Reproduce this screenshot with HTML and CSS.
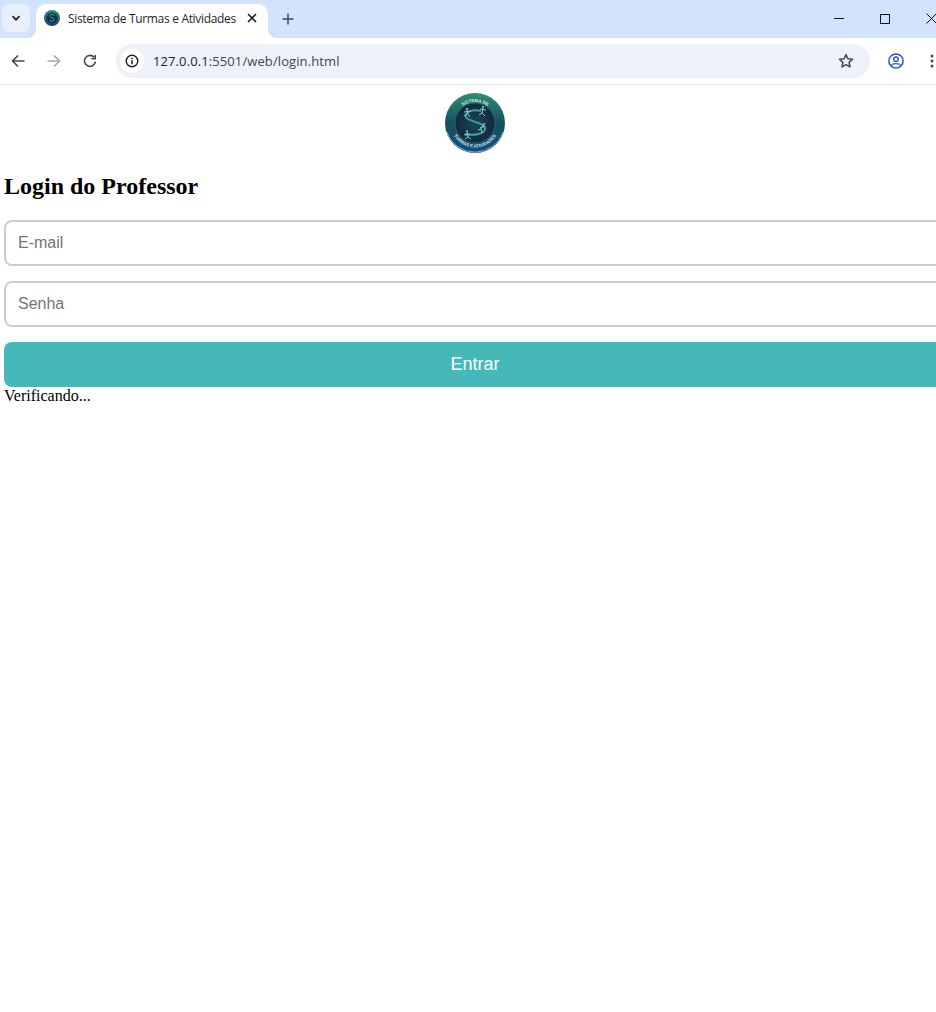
FILE: index.html
```html
<!DOCTYPE html>
<html lang="pt-BR">
<head>
  <meta charset="UTF-8">
  <title>Sistema de Turmas e Atividades</title>
  <link rel="stylesheet" href="styles.css">
</head>
<body>
  <header class="browser">
    <div class="tabstrip">
      <button class="tab-search" aria-label="Pesquisar guias">
        <svg width="12" height="12" viewBox="0 0 12 12"><path d="M2.5 4.2 6 7.7l3.5-3.5" fill="none" stroke="#1f1f1f" stroke-width="1.7"/></svg>
      </button>
      <div class="tab">
        <svg class="tab-icon" width="16" height="16" viewBox="0 0 16 16">
          <defs>
            <linearGradient id="favRing" x1="0" y1="0" x2="0" y2="1">
              <stop offset="0" stop-color="#2f8f78"/>
              <stop offset="1" stop-color="#1d3f6b"/>
            </linearGradient>
          </defs>
          <circle cx="8" cy="8" r="8" fill="url(#favRing)"/>
          <circle cx="8" cy="8" r="5.4" fill="#123347"/>
          <path d="M10.5 5.2C8.5 3.8 5.6 4.6 6 6.4c.4 1.7 4.4 1.4 4.4 3.2 0 1.7-3 2-4.8 1" fill="none" stroke="#5fa8a4" stroke-width=".9"/>
        </svg>
        <span class="tab-title">Sistema de Turmas e Atividades</span>
        <svg class="tab-close" width="10" height="10" viewBox="0 0 10 10"><path d="M1 1l8 8M9 1 1 9" stroke="#1f1f1f" stroke-width="1.6"/></svg>
      </div>
      <svg class="new-tab" width="12" height="12" viewBox="0 0 12 12"><path d="M6 .5v11M.5 6h11" stroke="#444746" stroke-width="1.5"/></svg>
      <div class="window-controls">
        <svg width="10" height="10" viewBox="0 0 10 10"><path d="M0 4.5h10" stroke="#111" stroke-width="1"/></svg>
        <svg width="10" height="10" viewBox="0 0 10 10"><rect x=".5" y=".5" width="9" height="9" fill="none" stroke="#111"/></svg>
        <svg width="11" height="11" viewBox="0 0 11 11"><path d="M.5.5l10 10M10.5.5l-10 10" stroke="#111"/></svg>
      </div>
    </div>
    <div class="toolbar">
      <svg width="14" height="14" viewBox="0 0 14 14"><path d="M13.5 7H1.5M7 1.5 1.5 7 7 12.5" fill="none" stroke="#444746" stroke-width="1.6"/></svg>
      <svg class="nav-off" width="14" height="14" viewBox="0 0 14 14"><path d="M.5 7h12M7 1.5 12.5 7 7 12.5" fill="none" stroke="#a5a7a8" stroke-width="1.6"/></svg>
      <svg class="reload" width="14" height="14" viewBox="0 0 14 14"><path d="M12.4 7.6A5.5 5.5 0 1 1 11 3.2M12.2.9v3.8H8.4" fill="none" stroke="#444746" stroke-width="1.6"/></svg>
      <div class="omnibox">
        <span class="site-info">
          <svg width="14" height="14" viewBox="0 0 14 14"><circle cx="7" cy="7" r="5.8" fill="none" stroke="#1f1f1f" stroke-width="1.4"/><path d="M7 6.2v4M7 3.7v1.5" stroke="#1f1f1f" stroke-width="1.5"/></svg>
        </span>
        <span class="url"><span class="url-host">127.0.0.1</span>:5501/web/login.html</span>
        <svg class="star" width="16" height="16" viewBox="0 0 16 16"><path d="M8 1.6l1.9 4.2 4.6.5-3.4 3.1.9 4.5L8 11.7l-4 2.2.9-4.5L1.5 6.3l4.6-.5z" fill="none" stroke="#444746" stroke-width="1.5" stroke-linejoin="round"/></svg>
      </div>
      <svg class="profile" width="16" height="16" viewBox="0 0 16 16"><circle cx="8" cy="8" r="7.1" fill="none" stroke="#2b56c6" stroke-width="1.5"/><circle cx="8" cy="6.2" r="2.2" fill="none" stroke="#2b56c6" stroke-width="1.4"/><path d="M3.4 12.4c1.6-2.4 7.6-2.4 9.2 0" fill="none" stroke="#2b56c6" stroke-width="1.4"/></svg>
      <svg class="menu" width="4" height="14" viewBox="0 0 4 14"><circle cx="2" cy="2" r="1.5" fill="#444746"/><circle cx="2" cy="7" r="1.5" fill="#444746"/><circle cx="2" cy="12" r="1.5" fill="#444746"/></svg>
    </div>
  </header>

  <main class="page">
    <svg class="logo" width="60" height="60" viewBox="0 0 60 60">
      <defs>
        <linearGradient id="logoRing" x1="0" y1="0" x2="0" y2="1">
          <stop offset="0" stop-color="#2f8f70"/>
          <stop offset="0.5" stop-color="#16505f"/>
          <stop offset="1" stop-color="#1d4a80"/>
        </linearGradient>
        <radialGradient id="logoCore">
          <stop offset="0" stop-color="#1a4656"/>
          <stop offset="1" stop-color="#12293c"/>
        </radialGradient>
        <path id="logoTop" d="M9 30a21 21 0 0 1 42 0"/>
        <path id="logoBottom" d="M5.500 30a24.500 24.500 0 0 0 49 0"/>
      </defs>
      <circle cx="30" cy="30" r="30" fill="url(#logoRing)"/>
      <path d="M2 39a29.500 29.500 0 0 0 56 0" fill="none" stroke="#6fb6d8" stroke-width="1"/>
      <circle cx="30" cy="30" r="20" fill="url(#logoCore)" stroke="#2c7a7a" stroke-width=".6"/>
      <text class="logo-text"><textPath href="#logoTop" startOffset="50%">SISTEMA DE</textPath></text>
      <text class="logo-text"><textPath href="#logoBottom" startOffset="50%">TURMAS E ATIVIDADES</textPath></text>
      <path d="M36 18C28 16 19 19 21 24c2 5 18 5 19 11 1 6-12 8-20 6" fill="none" stroke="#3f9ea0" stroke-width="2"/>
      <path class="logo-figure" d="M22 17l1 4M19 19l7-1M22 21l-3 2M23 21l2 3"/>
      <path class="logo-figure" d="M38 15l-1 5M35 16l6 1M37 20l-3 2M37 20l3 3"/>
      <path class="logo-figure" d="M38 32l-2 4M35 35l5-2M36 36l-3 1M36 36l1 4"/>
      <path class="logo-figure" d="M22 39l1 5M19 42l6-1M23 44l-3 2M23 44l3 2"/>
      <circle cx="22" cy="16" r="1" fill="#9fe0d8"/>
      <circle cx="38" cy="14" r="1" fill="#9fe0d8"/>
      <circle cx="39" cy="31" r="1" fill="#7fc8d8"/>
      <circle cx="22" cy="38" r="1" fill="#7fb8e0"/>
    </svg>
    <h2>Login do Professor</h2>
    <form class="login-form">
      <input type="email" placeholder="E-mail">
      <input type="password" placeholder="Senha">
      <button type="button">Entrar</button>
    </form>
    <div class="status">Verificando...</div>
  </main>
</body>
</html>
```

FILE: styles.css
```css
html, body {
  margin: 0;
  height: 100%;
  overflow: hidden;
  background: #fff;
}
.browser {
  width: 936px;
  font-family: "Open Sans", "Noto Sans", sans-serif;
}
.tabstrip {
  height: 38px;
  background-color: #d3e3fd;
  display: flex;
  align-items: flex-start;
  overflow: hidden;
}
.tab-search {
  width: 28px;
  height: 28px;
  margin: 4px 0 0 2px;
  padding: 0;
  border: none;
  border-radius: 8px;
  background-color: #e9f0fd;
  display: flex;
  align-items: center;
  justify-content: center;
}
.tab {
  position: relative;
  width: 232px;
  height: 34px;
  margin: 4px 0 0 6px;
  box-sizing: border-box;
  padding: 0 0 6px 8px;
  background-color: #fff;
  border-radius: 10px 10px 0 0;
  display: flex;
  align-items: center;
}
/* little curves where the tab meets the toolbar */
.tab::before, .tab::after {
  content: "";
  position: absolute;
  bottom: 0;
  width: 8px;
  height: 8px;
}
.tab::before {
  left: -8px;
  background: radial-gradient(circle at 0 0, #d3e3fd 7.5px, #fff 8px);
}
.tab::after {
  right: -8px;
  background: radial-gradient(circle at 100% 0, #d3e3fd 7.5px, #fff 8px);
}
.tab-icon {
  flex: none;
}
.tab-title {
  margin-left: 8px;
  font-size: 12px;
  color: #1f1f1f;
  white-space: nowrap;
  width: 168px;
  letter-spacing: -0.32px;
}
.tab-close {
  margin-left: 11px;
}
.new-tab {
  margin: 13px 0 0 14px;
}
.window-controls {
  margin-left: auto;
  width: 103px;
  flex: none;
  display: flex;
  justify-content: space-between;
  align-items: center;
  padding-top: 13px;
  margin-right: -1px;
}
.window-controls svg {
  flex: none;
}
.window-controls svg:nth-child(2) {
  margin-left: 36px;
}
.window-controls svg:last-child {
  margin-left: 36px;
}
.toolbar {
  height: 47px;
  box-sizing: border-box;
  border-bottom: 1px solid #e3e3e3;
  background-color: #fff;
  display: flex;
  align-items: center;
  padding-left: 11px;
}
.toolbar > svg {
  flex: none;
  margin-right: 22px;
}
.omnibox {
  width: 754px;
  height: 34px;
  flex: none;
  margin-left: -3px;
  box-sizing: border-box;
  background-color: #ecf1fa;
  border-radius: 17px;
  display: flex;
  align-items: center;
  padding: 0 16px 0 4px;
}
.site-info {
  width: 24px;
  height: 24px;
  border-radius: 50%;
  background-color: #fff;
  display: flex;
  align-items: center;
  justify-content: center;
}
.url {
  margin-left: 9px;
  font-size: 13px;
  letter-spacing: 0.1px;
  color: #444746;
  white-space: nowrap;
}
.url-host {
  color: #1f1f1f;
}
.star {
  margin-left: auto;
}
.toolbar .profile {
  margin: 0 0 0 18px;
}
.toolbar .menu {
  margin: 0 0 0 26px;
}
.page {
  width: 942px;
  padding: 8px 0 0 4px;
  font-family: "Liberation Serif", serif;
  font-size: 16px;
  color: #000;
}
.logo {
  display: block;
  margin: 0 auto;
}
.logo-text {
  font-family: "Liberation Sans", sans-serif;
  font-size: 4.4px;
  font-weight: bold;
  fill: #c9efe6;
  text-anchor: middle;
}
.logo-figure {
  fill: none;
  stroke: #7fd0cc;
  stroke-width: 1;
}
h2 {
  font-size: 24px;
  margin: 20px 0;
}
.login-form {
  display: flex;
  flex-direction: column;
  gap: 15px;
}
.login-form input {
  height: 46px;
  box-sizing: border-box;
  padding: 12px;
  border: 2px solid #ccc;
  border-radius: 8px;
  font-family: "Liberation Sans", Arial, sans-serif;
  font-size: 16px;
}
.login-form button {
  height: 45px;
  padding: 0;
  border: none;
  border-radius: 8px;
  background-color: #45b8ba;
  color: #fff;
  font-family: "Liberation Sans", Arial, sans-serif;
  font-size: 18px;
}
```
